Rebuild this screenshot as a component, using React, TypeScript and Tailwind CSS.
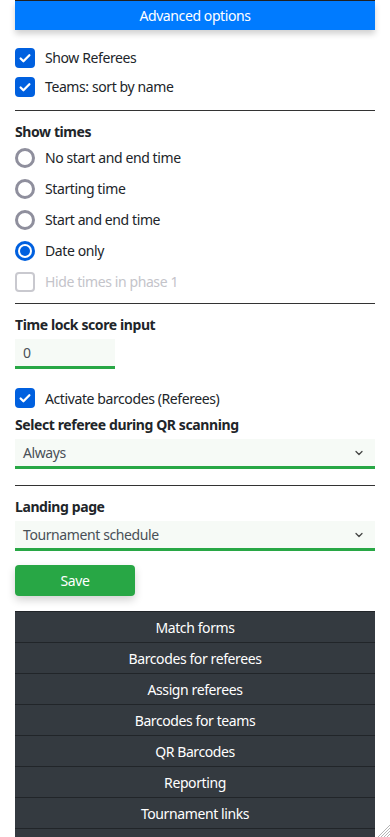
import { ChevronDown } from 'lucide-react';

const menuItems = [
    'Match forms',
    'Barcodes for referees',
    'Assign referees',
    'Barcodes for teams',
    'QR Barcodes',
    'Reporting',
    'Tournament links',
];

function Check({ checked = true, disabled = false }: { checked?: boolean; disabled?: boolean }) {
    if (disabled) {
        return <span className="w-5 h-5 shrink-0 rounded-[4px] border-2 border-[#c9c9cf] bg-white" />;
    }
    return (
        <span className="w-5 h-5 shrink-0 rounded-[4px] bg-[#0060df] flex items-center justify-center">
            {checked && (
                <svg viewBox="0 0 16 16" className="w-[14px] h-[14px]">
                    <path d="M3 8.5l3.2 3.2L13 4.8" fill="none" stroke="white" strokeWidth="2.6" strokeLinecap="round" strokeLinejoin="round" />
                </svg>
            )}
        </span>
    );
}

function Radio({ checked = false }: { checked?: boolean }) {
    if (checked) {
        return (
            <span className="w-5 h-5 shrink-0 rounded-full bg-[#0060df] flex items-center justify-center">
                <span className="w-[14px] h-[14px] rounded-full bg-white flex items-center justify-center">
                    <span className="w-[10px] h-[10px] rounded-full bg-[#0060df]" />
                </span>
            </span>
        );
    }
    return <span className="w-5 h-5 shrink-0 rounded-full border-[3px] border-[#8f8f9d] bg-white" />;
}

function Row({ children, muted = false }: { children: React.ReactNode; muted?: boolean }) {
    return (
        <label className={`flex items-center gap-[10px] h-[31px] ${muted ? 'text-[#c4c4ca]' : 'text-[#212529]'}`}>
            {children}
        </label>
    );
}

function Select({ value }: { value: string }) {
    return (
        <div className="h-[30px] bg-[#f6faf6] border-b-[3px] border-[#28a745] flex items-center justify-between pl-2 pr-[10px] text-[#495057]">
            <span>{value}</span>
            <ChevronDown className="w-[12px] h-[12px] text-[#444]" strokeWidth={2.5} />
        </div>
    );
}

export default function App() {
    return (
        <div
            className="relative h-screen bg-white text-[14px] tracking-[-0.4px] overflow-hidden"
            style={{ fontFamily: '"Noto Sans", sans-serif' }}
        >
            <div className="px-[15px]">
                {/* Header */}
                <div className="border-t border-[#222]">
                    <div className="h-[29px] bg-[#007bff] text-white flex items-center justify-center shadow-[0_4px_6px_rgba(0,0,0,0.18)]">
                        Advanced options
                    </div>
                </div>

                <div className="pt-[13px] pb-[9px] flex flex-col">
                    <label className="flex items-center gap-[10px] h-[29px] text-[#212529]">
                        <Check />
                        Show Referees
                    </label>
                    <label className="flex items-center gap-[10px] h-[29px] text-[#212529]">
                        <Check />
                        Teams: sort by name
                    </label>
                </div>

                <div className="border-t border-[#333]" />

                <div className="pt-[11px] pb-[6px]">
                    <div className="font-bold text-[#212529] leading-[20px]">Show times</div>
                    <div>
                        <Row><Radio /> No start and end time</Row>
                        <Row><Radio /> Starting time</Row>
                        <Row><Radio /> Start and end time</Row>
                        <Row><Radio checked /> Date only</Row>
                        <Row muted><Check disabled /> Hide times in phase 1</Row>
                    </div>
                </div>

                <div className="border-t border-[#333]" />

                <div className="pt-[11px]">
                    <div className="font-bold text-[#212529] leading-[20px]">Time lock score input</div>
                    <div className="mt-[4px] w-[100px] h-[30px] bg-[#f6faf6] border-b-[3px] border-[#28a745] flex items-center pl-2 text-[#495057]">
                        0
                    </div>
                    <div className="mt-[14px]">
                        <label className="flex items-center gap-[10px] h-[30px] text-[#212529]">
                            <Check />
                            Activate barcodes (Referees)
                        </label>
                    </div>
                    <div className="font-bold text-[#212529] leading-[20px] mt-[2px]">Select referee during QR scanning</div>
                    <div className="mt-[4px]">
                        <Select value="Always" />
                    </div>
                </div>

                <div className="mt-[16px] border-t border-[#333]" />

                <div className="pt-[11px]">
                    <div className="font-bold text-[#212529] leading-[20px]">Landing page</div>
                    <div className="mt-[4px]">
                        <Select value="Tournament schedule" />
                    </div>
                    <button className="mt-[14px] w-[120px] h-[31px] rounded-[4px] bg-[#28a745] text-white shadow-[0_4px_8px_rgba(0,0,0,0.18)]">
                        Save
                    </button>
                </div>

                {/* Menu */}
                <div className="mt-[15px] border-t border-[#212529]">
                    {menuItems.map((item) => (
                        <div
                            key={item}
                            className="h-[31px] bg-[#343a40] border-b border-[#212529] text-white flex items-center justify-center"
                        >
                            {item}
                        </div>
                    ))}
                    <div className="h-[31px] bg-[#343a40]" />
                </div>
            </div>

            {/* resize grip */}
            <svg className="absolute right-0 bottom-0 w-[14px] h-[14px]" viewBox="0 0 14 14">
                <path d="M14 2L2 14M14 5L5 14M14 8L8 14M14 11L11 14" stroke="#b5b5b5" strokeWidth="1" />
            </svg>
        </div>
    );
}
